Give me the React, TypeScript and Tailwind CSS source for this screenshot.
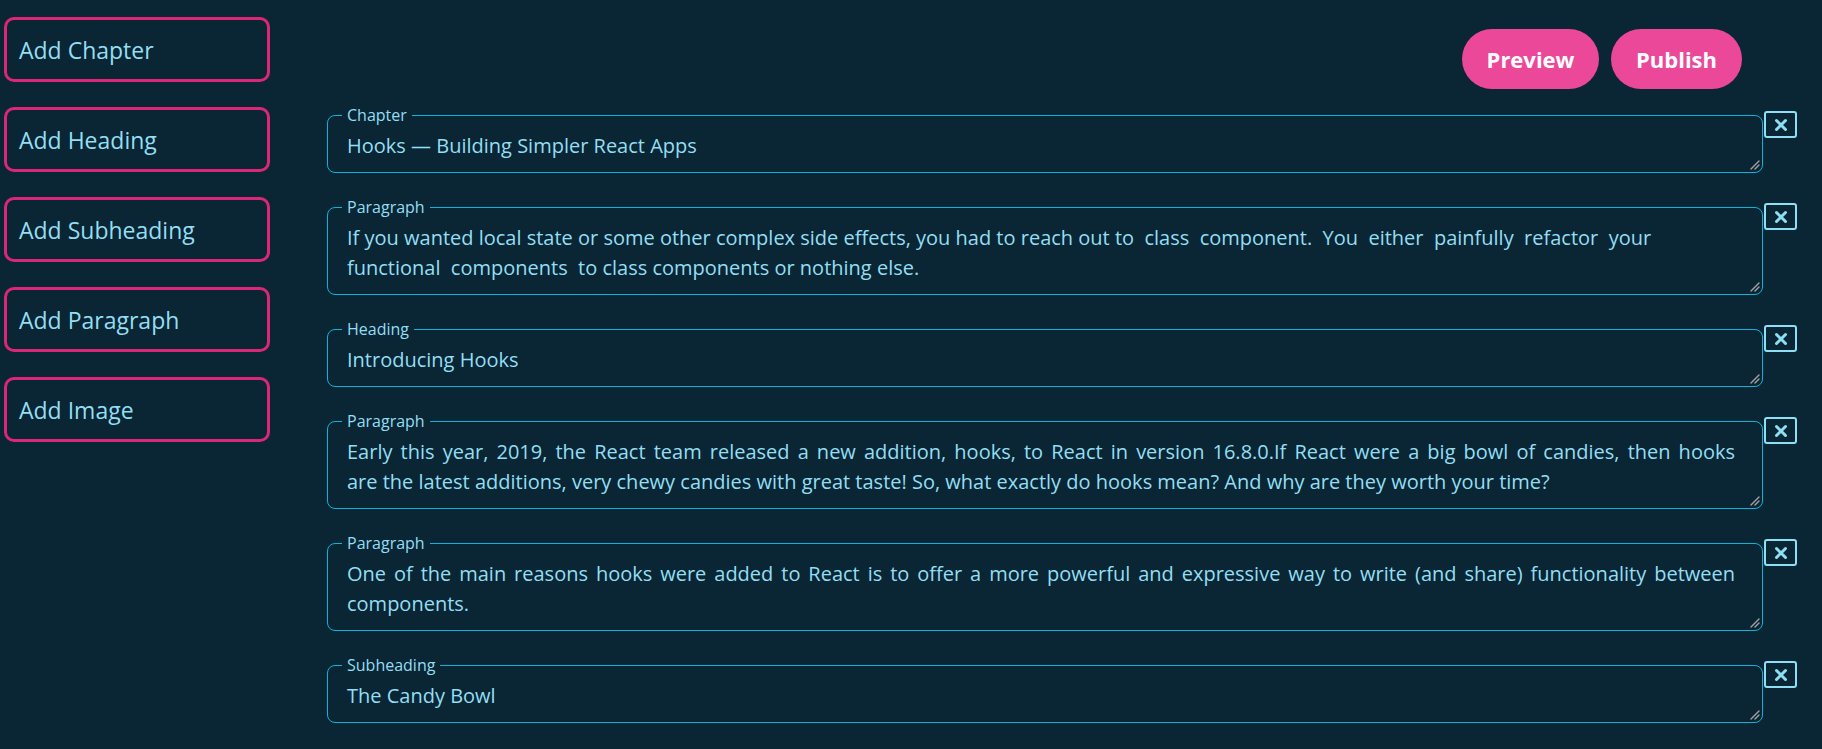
import { X } from "lucide-react";

const font = { fontFamily: '"Segoe UI", "Open Sans", sans-serif' };

type Block = {
  label: string;
  lines: { text: string; justify?: boolean }[];
};

const blocks: Block[] = [
  { label: "Chapter", lines: [{ text: "Hooks — Building Simpler React Apps" }] },
  {
    label: "Paragraph",
    lines: [
      {
        text: "If you wanted local state or some other complex side effects, you had to reach out to  class  component.  You  either  painfully  refactor  your",
      },
      { text: "functional  components  to class components or nothing else." },
    ],
  },
  { label: "Heading", lines: [{ text: "Introducing Hooks" }] },
  {
    label: "Paragraph",
    lines: [
      {
        text: "Early this year, 2019, the React team released a new addition, hooks, to React in version 16.8.0.If React were a big bowl of candies, then hooks",
        justify: true,
      },
      {
        text: "are the latest additions, very chewy candies with great taste! So, what exactly do hooks mean? And why are they worth your time?",
      },
    ],
  },
  {
    label: "Paragraph",
    lines: [
      {
        text: "One of the main reasons hooks were added to React is to offer a more powerful and expressive way to write (and share) functionality between",
        justify: true,
      },
      { text: "components." },
    ],
  },
  { label: "Subheading", lines: [{ text: "The Candy Bowl" }] },
];

const tools = ["Add Chapter", "Add Heading", "Add Subheading", "Add Paragraph", "Add Image"];

function ResizeGrip() {
  return (
    <svg className="absolute right-[2px] bottom-[2px] h-[11px] w-[11px]" viewBox="0 0 11 11">
      <path d="M10 2 L2 10 M10 6 L6 10" stroke="#a3a3a3" strokeWidth="1.4" strokeLinecap="round" />
    </svg>
  );
}

function EditorBlock({ block }: { block: Block }) {
  return (
    <div className="flex items-start">
      <fieldset className="relative w-[1436px] rounded-lg border border-[#0bb4d8] px-[14px] pb-[11px]">
        <legend className="px-[5px] text-[16px] leading-[18px] text-[#92dff3]">{block.label}</legend>
        <div className="pt-[7px] pr-[13px] pl-[5px] text-[20px] leading-[30px] text-[#92dff3]">
          {block.lines.map((line, i) => (
            <div
              key={i}
              className={
                line.justify
                  ? "whitespace-pre-wrap text-justify [text-align-last:justify]"
                  : "whitespace-pre"
              }
            >
              {line.text}
            </div>
          ))}
        </div>
        <ResizeGrip />
      </fieldset>
      <button className="mt-[5px] ml-px flex h-[27px] w-[33px] items-center justify-center rounded-[3px] border-2 border-[#8ddff5] text-[#8ddff5]">
        <X className="h-[18px] w-[18px]" strokeWidth={4} />
      </button>
    </div>
  );
}

export default function App() {
  return (
    <div className="flex min-h-[749px] w-full bg-[#0a2533]" style={font}>
      <aside className="flex w-[270px] shrink-0 flex-col gap-[25px] pt-[17px] pl-[4px]">
        {tools.map((t) => (
          <button
            key={t}
            className="flex h-[65px] w-[266px] items-center rounded-[10px] border-[3px] border-[#db2777] pt-[2px] pl-[12px] text-left text-[23px] text-[#92dff3]"
          >
            {t}
          </button>
        ))}
      </aside>

      <main className="ml-[57px] flex w-[1470px] flex-col">
        <div className="flex justify-end gap-[12px] pt-[29px] pr-[55px] pb-[17px]">
          <button className="h-[60px] w-[137px] rounded-full bg-[#ec4899] text-[22px] font-bold text-white">
            Preview
          </button>
          <button className="h-[60px] w-[131px] rounded-full bg-[#ec4899] text-[22px] font-bold text-white">
            Publish
          </button>
        </div>
        <div className="flex flex-col gap-[25px]">
          {blocks.map((b, i) => (
            <EditorBlock key={i} block={b} />
          ))}
        </div>
      </main>
    </div>
  );
}
